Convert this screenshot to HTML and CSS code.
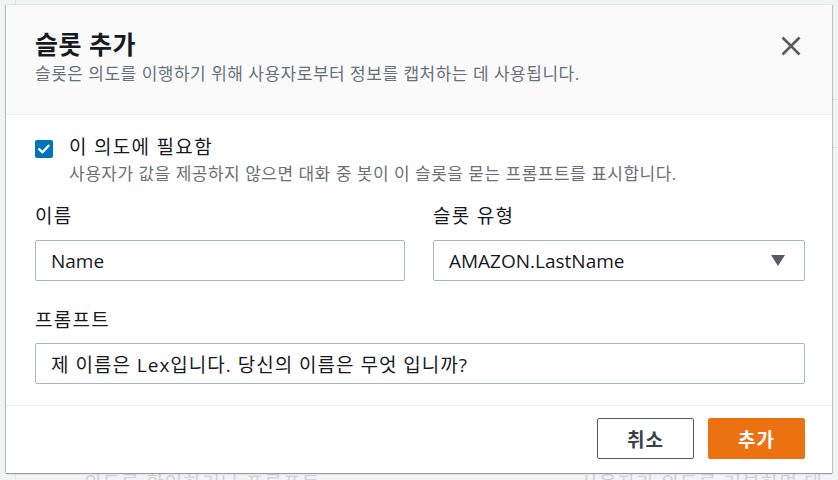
FILE: index.html
```html
<!DOCTYPE html>
<html lang="ko">
<head>
<meta charset="utf-8">
<link rel="stylesheet" href="styles.css">
</head>
<body>
<div class="page">
  <div class="page-rows">
    <div class="page-row"></div>
    <div class="page-row"></div>
  </div>
  <div class="page-bottom">
    <span class="ghost ghost-left">의도를 확인하거나 프롬프트</span>
    <span class="ghost ghost-right">사용자가 의도를 거부하면 대</span>
  </div>
</div>
<div class="modal">
  <div class="modal-header">
    <div class="header-text">
      <h1 class="title">슬롯 추가</h1>
      <p class="subtitle">슬롯은 의도를 이행하기 위해 사용자로부터 정보를 캡처하는 데 사용됩니다.</p>
    </div>
    <button class="close" aria-label="닫기">
      <svg width="20" height="20" viewBox="0 0 20 20"><path d="M1.5 1.5 L18.5 18.5 M18.5 1.5 L1.5 18.5" stroke="#545b64" stroke-width="2.6" fill="none"/></svg>
    </button>
  </div>
  <div class="modal-body">
    <div class="check-row">
      <span class="checkbox">
        <svg width="18" height="18" viewBox="0 0 18 18"><path d="M4.2 9.2 L7.5 12.3 L13.6 5.8" stroke="#fff" stroke-width="2.3" fill="none" stroke-linecap="round" stroke-linejoin="round"/></svg>
      </span>
      <div class="check-text">
        <div class="check-label">이 의도에 필요함</div>
        <div class="check-desc">사용자가 값을 제공하지 않으면 대화 중 봇이 이 슬롯을 묻는 프롬프트를 표시합니다.</div>
      </div>
    </div>
    <div class="field-row">
      <div class="field">
        <label class="label">이름</label>
        <div class="input">Name</div>
      </div>
      <div class="field">
        <label class="label">슬롯 유형</label>
        <div class="input select">
          <span>AMAZON.LastName</span>
          <svg class="caret" width="14" height="11" viewBox="0 0 14 11"><path d="M0 0 H14 L7 11 Z" fill="#545b64"/></svg>
        </div>
      </div>
    </div>
    <div class="field full">
      <label class="label">프롬프트</label>
      <div class="input input-ko">제 이름은 Lex입니다. 당신의 이름은 무엇 입니까?</div>
    </div>
  </div>
  <div class="modal-footer">
    <button class="btn btn-normal">취소</button>
    <button class="btn btn-primary">추가</button>
  </div>
</div>
</body>
</html>
```

FILE: styles.css
```css
* { box-sizing: border-box; }
html, body { margin: 0; padding: 0; }
body {
  width: 838px;
  height: 480px;
  overflow: hidden;
  background: #f2f3f3;
  font-family: "Open Sans", "Noto Sans CJK KR", sans-serif;
  color: #16191f;
  position: relative;
}
.page {
  height: 480px;
  margin-left: 15px;
  border-left: 1px solid #e4e7e7;
  position: relative;
}
.page-rows { padding-top: 52px; }
.page-row { height: 48px; border-bottom: 1px solid #e4e7e7; }
.page-bottom {
  position: absolute;
  left: 0; right: 0; top: 470px;
  display: flex;
  font-size: 19px;
  line-height: 26px;
  letter-spacing: 1.2px;
  color: #d0d3d5;
  white-space: nowrap;
}
.ghost-left { margin-left: 68px; }
.ghost-right { margin-left: 260px; }

.modal {
  position: absolute;
  left: 6px;
  top: 5px;
  width: 826px;
  height: 468px;
  background: #fff;
  box-shadow: 0 1px 1px 0 rgba(0, 28, 36, 0.35), 1px 0 1px 0 rgba(0,28,36,0.18), -1px 0 1px 0 rgba(0,28,36,0.18);
  display: flex;
  flex-direction: column;
}
.modal-header {
  height: 110px;
  flex: none;
  background: #fafafa;
  border-bottom: 1px solid #eaeded;
  padding: 24px 29px 0 29px;
  display: flex;
  justify-content: space-between;
  align-items: flex-start;
}
.title {
  margin: 0;
  font-size: 25px;
  line-height: 30px;
  letter-spacing: 0.5px;
  font-weight: 700;
  color: #16191f;
}
.subtitle {
  margin: 4px 0 0;
  font-size: 17px;
  line-height: 22px;
  letter-spacing: 0.5px;
  color: #687078;
}
.close {
  border: 0;
  background: none;
  padding: 0;
  margin: 7px 2px 0 0;
  width: 20px;
  height: 20px;
  display: flex;
}
.modal-body {
  height: 290px;
  flex: none;
  padding: 19px 27px 0 29px;
}
.check-row { display: flex; align-items: flex-start; }
.checkbox {
  width: 18px;
  height: 18px;
  border-radius: 2px;
  background: #0073bb;
  margin-top: 6px;
  margin-right: 16px;
  display: flex;
  flex: none;
}
.check-label { font-size: 19px; line-height: 26px; letter-spacing: 1.3px; }
.check-desc {
  font-size: 17px;
  line-height: 22px;
  letter-spacing: 0.5px;
  color: #687078;
  margin-top: 3px;
}

.field-row {
  display: grid;
  grid-template-columns: 370px 372px;
  column-gap: 28px;
  margin-top: 18px;
}
.label {
  display: block;
  font-size: 19px;
  line-height: 26px;
  letter-spacing: 1.3px;
  margin-bottom: 11px;
}
.input {
  height: 41px;
  border: 1px solid #aab7b8;
  border-radius: 2px;
  padding: 0 15px;
  font-size: 19px;
  display: flex;
  align-items: center;
  color: #16191f;
  white-space: nowrap;
}
.input-ko { letter-spacing: 1px; }
.select { justify-content: space-between; padding-right: 19px; }
.full { margin-top: 26px; width: 770px; }
.full .label { margin-bottom: 10px; }

.modal-footer {
  flex: 1;
  border-top: 1px solid #eaeded;
  display: flex;
  justify-content: flex-end;
  align-items: flex-start;
  padding: 12px 27px 0 0;
  gap: 14px;
}
.btn {
  height: 41px;
  width: 97px;
  border-radius: 2px;
  font-family: "Open Sans", "Noto Sans CJK KR", sans-serif;
  font-size: 19px;
  font-weight: 700;
  letter-spacing: 1px;
  padding: 0;
}
.btn-normal { background: #fff; border: 1px solid #545b64; color: #3b4148; }
.btn-primary { background: #ec7211; border: 1px solid #ec7211; color: #fff; }
```
